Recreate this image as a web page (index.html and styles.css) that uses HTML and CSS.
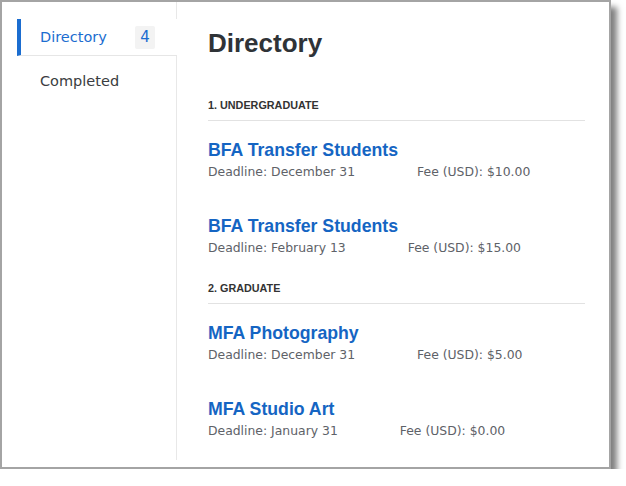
FILE: index.html
```html
<!DOCTYPE html>
<html lang="en">
<head>
    <meta charset="UTF-8">
    <meta name="viewport" content="width=device-width, initial-scale=1.0">
    <title>Directory</title>
    <link rel="stylesheet" href="styles.css">
</head>
<body>
    <div class="ventana">
        <nav class="lateral">
            <div class="opcion activa">
                <span>Directory</span>
                <span class="contador">4</span>
            </div>
            <div class="opcion">
                <span>Completed</span>
            </div>
        </nav>

        <main class="contenido">
            <h1 class="titulo">Directory</h1>

            <section class="grupo">
                <h2 class="grupo-nombre">1. UNDERGRADUATE</h2>
                <div class="programa">
                    <a class="programa-nombre" href="#">BFA Transfer Students</a>
                    <div class="programa-datos">
                        <span>Deadline: December 31</span>
                        <span>Fee (USD): $10.00</span>
                    </div>
                </div>
                <div class="programa">
                    <a class="programa-nombre" href="#">BFA Transfer Students</a>
                    <div class="programa-datos">
                        <span>Deadline: February 13</span>
                        <span>Fee (USD): $15.00</span>
                    </div>
                </div>
            </section>

            <section class="grupo">
                <h2 class="grupo-nombre">2. GRADUATE</h2>
                <div class="programa">
                    <a class="programa-nombre" href="#">MFA Photography</a>
                    <div class="programa-datos">
                        <span>Deadline: December 31</span>
                        <span>Fee (USD): $5.00</span>
                    </div>
                </div>
                <div class="programa">
                    <a class="programa-nombre" href="#">MFA Studio Art</a>
                    <div class="programa-datos">
                        <span>Deadline: January 31</span>
                        <span>Fee (USD): $0.00</span>
                    </div>
                </div>
            </section>
        </main>
    </div>
</body>
</html>
```

FILE: styles.css
```css
body {
    margin: 0;
    background-color: white;
}

.ventana {
    box-sizing: border-box;
    width: 611px;
    height: 469px;
    display: flex;
    padding-bottom: 7px;
    border: 2px solid #a4a4a4;
    background-color: white;
    box-shadow: 6px 7px 6px rgba(0, 0, 0, 0.5);
}

.lateral {
    box-sizing: border-box;
    width: 175px;
    padding: 17px 0 0 15px;
    border-right: 1px solid #e8e8e8;
    font-family: "DejaVu Sans", sans-serif;
    font-size: 14.5px;
}

.opcion {
    display: flex;
    align-items: center;
    height: 36px;
    padding: 0 22px 0 19px;
    border-left: 4px solid transparent;
    color: #3a3d41;
}

.opcion + .opcion {
    margin-top: 7px;
}

/* la opción activa tapa el borde del lateral */
.opcion.activa {
    margin-right: -1px;
    border-left-color: #1b6dd0;
    border-bottom: 1px solid #e6e6e6;
    background-color: white;
    color: #1b6dd0;
}

.contador {
    margin-left: auto;
    width: 20px;
    height: 23px;
    line-height: 23px;
    text-align: center;
    font-size: 15px;
    background-color: #f3f3f3;
    border-radius: 2px;
}

.contenido {
    flex: 1;
    padding: 26px 24px 0 31px;
    font-family: "Liberation Sans", Arial, sans-serif;
}

.titulo {
    margin: 0;
    font-size: 26px;
    line-height: 30px;
    color: #2f3337;
}

.grupo {
    margin-top: 24px;
}

.grupo:first-of-type {
    margin-top: 40px;
}

.grupo-nombre {
    margin: 0 0 18px;
    padding-bottom: 8px;
    border-bottom: 1px solid #e2e2e2;
    font-size: 10.8px;
    line-height: 14px;
    color: #333;
}

.programa + .programa {
    margin-top: 34px;
}

.programa-nombre {
    display: block;
    font-size: 17.7px;
    line-height: 22px;
    font-weight: bold;
    color: #1565c3;
    text-decoration: none;
}

.programa-datos {
    display: flex;
    gap: 62px;
    margin-top: 2px;
    font-family: "DejaVu Sans", sans-serif;
    font-size: 12.4px;
    line-height: 18px;
    color: #5e6268;
}
```
